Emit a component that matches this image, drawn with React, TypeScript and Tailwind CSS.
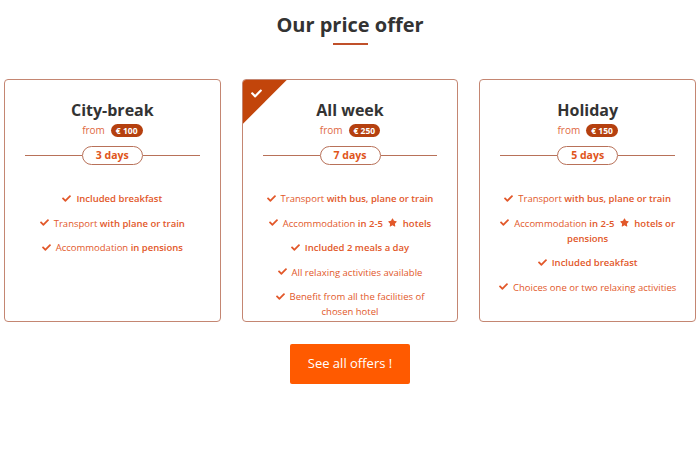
import { FaCheck, FaStar } from "react-icons/fa";
import type { ReactNode } from "react";

interface Offer {
    title: string;
    price: string;
    days: string;
    featured?: boolean;
    items: ReactNode[];
}

const star = <FaStar className="inline-block w-[9px] h-[9px] mx-[3px] -mt-[2px]" />;

const offers: Offer[] = [
    {
        title: "City-break",
        price: "€ 100",
        days: "3 days",
        items: [
            <b>Included breakfast</b>,
            <>Transport <b>with plane or train</b></>,
            <>Accommodation <b>in pensions</b></>,
        ],
    },
    {
        title: "All week",
        price: "€ 250",
        days: "7 days",
        featured: true,
        items: [
            <>Transport <b>with bus, plane or train</b></>,
            <>Accommodation <b>in 2-5 {star} hotels</b></>,
            <b>Included 2 meals a day</b>,
            <>All relaxing activities available</>,
            <>Benefit from all the facilities of<br />chosen hotel</>,
        ],
    },
    {
        title: "Holiday",
        price: "€ 150",
        days: "5 days",
        items: [
            <>Transport <b>with bus, plane or train</b></>,
            <>Accommodation <b>in 2-5 {star} hotels or<br />pensions</b></>,
            <b>Included breakfast</b>,
            <>Choices one or two relaxing activities</>,
        ],
    },
];

function OfferCard({ offer }: { offer: Offer }) {
    return (
        <div className="relative overflow-hidden h-[243px] border border-[#c48672] rounded-[4px] bg-white flex flex-col items-center pt-[20px]">
            {offer.featured ? (
                <div className="absolute top-0 left-0 w-[44px] h-[44px] bg-[#c2450b] [clip-path:polygon(0_0,100%_0,0_100%)]">
                    <FaCheck className="absolute top-[8px] left-[8px] w-[11px] h-[11px] text-white" />
                </div>
            ) : null}
            <h3 className="text-[16px] leading-[21px] font-bold text-[#333]">{offer.title}</h3>
            <div className="flex items-center gap-[6px] mt-[2px] text-[10px] leading-[14px] text-[#e0693f]">
                <span>from</span>
                <span className="bg-[#b5400f] text-white font-bold text-[8.5px] leading-[13px] rounded-full px-[5px]">
                    {offer.price}
                </span>
            </div>
            <div className="w-full px-[20px] mt-[9px] flex items-center">
                <div className="flex-1 h-px bg-[#b87159]" />
                <div className="w-[61px] h-[19px] rounded-full border border-[#b87159] bg-white flex items-center justify-center text-[10.5px] font-bold text-[#e0551b]">
                    {offer.days}
                </div>
                <div className="flex-1 h-px bg-[#b87159]" />
            </div>
            <ul className="mt-[26px] flex flex-col gap-[9.5px] px-[12px] text-center text-[9.5px] leading-[15px] text-[#e2582a] [&_b]:font-semibold">
                {offer.items.map((it, i) => (
                    <li key={i}>
                        <FaCheck className="inline-block w-[9px] h-[9px] mr-[5px] -mt-[2px]" />
                        {it}
                    </li>
                ))}
            </ul>
        </div>
    );
}

export default function App() {
    return (
        <div className="w-[700px] h-[466px] bg-white font-['Open_Sans',sans-serif] flex flex-col items-center">
            <h2 className="mt-[11px] text-[20px] leading-[28px] font-bold text-[#333]">Our price offer</h2>
            <div className="mt-[4px] w-[35px] h-[2px] bg-[#c0502a]" />
            <div className="mt-[34px] w-full px-[4px] grid grid-cols-3 gap-[21px]">
                {offers.map((o) => (
                    <OfferCard key={o.title} offer={o} />
                ))}
            </div>
            <button className="mt-[22px] w-[120px] h-[40px] rounded-[2px] bg-[#ff5a00] text-white text-[13px]">
                See all offers !
            </button>
        </div>
    );
}
